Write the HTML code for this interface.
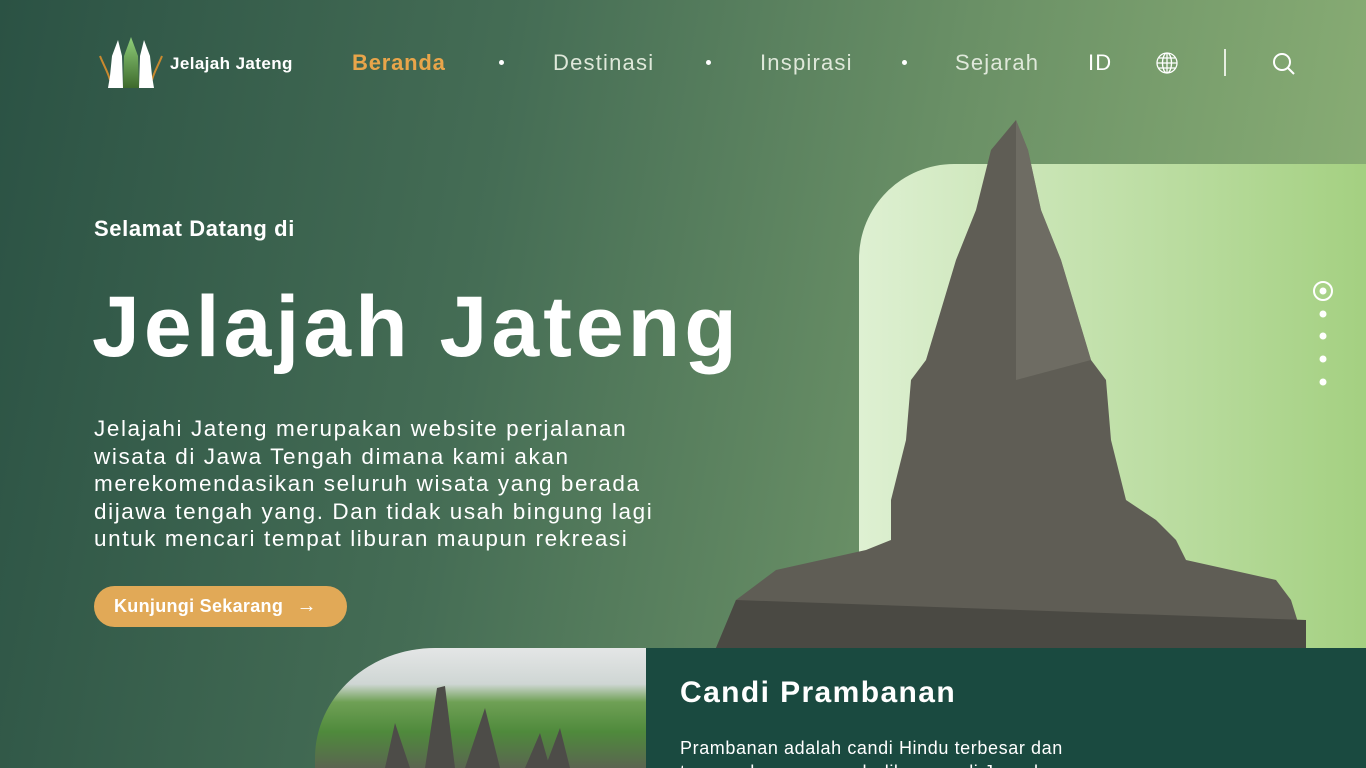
<!DOCTYPE html>
<html style="width:1366px;height:768px;overflow:hidden"><head><meta charset="utf-8"><style>
*{margin:0;padding:0;box-sizing:border-box}
body{width:1366px;height:768px;overflow:hidden;position:relative;font-family:"Liberation Sans",sans-serif;
background:linear-gradient(100deg,#2b5244 0%,#456d55 35%,#6a9066 65%,#8fb377 100%);}
.nav{position:absolute;top:50px;font-size:22px;color:#dfe8da;letter-spacing:1.2px}
.dot{position:absolute;top:60px;width:5px;height:5px;border-radius:50%;background:#fff}
</style></head><body>
<svg style="position:absolute;left:98px;top:36px" width="66" height="54" viewBox="0 0 66 54">
<path d="M2 20 C6 30 10 36 12 44" stroke="#c9892f" stroke-width="2" fill="none"/>
<path d="M64 20 C60 30 56 36 54 44" stroke="#c9892f" stroke-width="2" fill="none"/>
<defs><linearGradient id="g" x1="0" y1="0" x2="0" y2="1"><stop offset="0" stop-color="#8fcf7a"/><stop offset="1" stop-color="#3e6a2c"/></linearGradient></defs>
<path d="M33 1 L40 20 L41 52 L25 52 L26 20Z" fill="url(#g)"/>
<path d="M20 4 L24 20 L25 52 L10 52 L12 40 L14 20Z" fill="#fff"/>
<path d="M46 4 L42 20 L41 52 L56 52 L54 40 L52 20Z" fill="#fff"/>
</svg>
<div style="position:absolute;left:170px;top:54px;color:#fff;font-weight:bold;font-size:17px;letter-spacing:.4px">Jelajah Jateng</div>
<div class="nav" style="left:352px;color:#e9a54a;font-weight:bold;letter-spacing:.8px">Beranda</div>
<div class="dot" style="left:499px"></div>
<div class="nav" style="left:553px">Destinasi</div>
<div class="dot" style="left:706px"></div>
<div class="nav" style="left:760px">Inspirasi</div>
<div class="dot" style="left:902px"></div>
<div class="nav" style="left:955px">Sejarah</div>
<div class="nav" style="left:1088px;color:#fff">ID</div>
<svg style="position:absolute;left:1156px;top:52px" width="22" height="22" viewBox="0 0 22 22" fill="none" stroke="#fff" stroke-width="1.3"><circle cx="11" cy="11" r="10"/><ellipse cx="11" cy="11" rx="4.5" ry="10"/><path d="M1 11H21M3 6H19M3 16H19M11 1V21"/></svg>
<div style="position:absolute;left:1224px;top:49px;width:1.5px;height:27px;background:#e6eee0"></div>
<svg style="position:absolute;left:1272px;top:52px" width="24" height="24" viewBox="0 0 24 24" fill="none" stroke="#fff" stroke-width="2"><circle cx="10" cy="10" r="8"/><path d="M16 16L22 22"/></svg>

<div style="position:absolute;left:94px;top:216px;color:#fff;font-weight:bold;font-size:22px;letter-spacing:.6px">Selamat Datang di</div>
<div style="position:absolute;left:92px;top:278px;color:#fff;font-weight:bold;font-size:86px;letter-spacing:4px;white-space:nowrap">Jelajah Jateng</div>
<div style="position:absolute;left:94px;top:415px;color:#fff;font-size:22.5px;line-height:27.5px;letter-spacing:1.6px;white-space:nowrap">Jelajahi Jateng merupakan website perjalanan<br>wisata di Jawa Tengah dimana kami akan<br>merekomendasikan seluruh wisata yang berada<br>dijawa tengah yang. Dan tidak usah bingung lagi<br>untuk mencari tempat liburan maupun rekreasi</div>
<div style="position:absolute;left:94px;top:586px;width:253px;height:41px;border-radius:21px;background:#e1a957;color:#fff;font-weight:bold;font-size:18px;line-height:41px;padding-left:20px;letter-spacing:.3px">Kunjungi Sekarang <span style="margin-left:8px;font-size:20px">→</span></div>

<div style="position:absolute;left:859px;top:164px;width:507px;height:484px;border-top-left-radius:95px;background:linear-gradient(90deg,#def0d2,#a4d081)"></div>
<svg style="position:absolute;left:716px;top:120px" width="600" height="530" viewBox="0 0 600 530">
<path d="M300 0 L312 30 L325 90 L345 140 L360 190 L375 240 L390 260 L395 320 L410 380 L440 400 L460 420 L470 440 L560 460 L575 480 L590 528 L0 528 L20 480 L60 450 L150 430 L175 420 L175 380 L190 320 L195 260 L210 240 L225 190 L240 140 L260 90 L275 30 Z" fill="#5f5d55"/>
<path d="M300 0 L312 30 L325 90 L345 140 L360 190 L375 240 L300 260 Z" fill="#78766c" opacity=".6"/>
<path d="M20 480 L590 500 L590 528 L0 528Z" fill="#4a4943"/>
</svg>
<svg style="position:absolute;left:1310px;top:278px" width="26" height="112">
<circle cx="13" cy="13" r="9" fill="none" stroke="#fff" stroke-width="2"/><circle cx="13" cy="13" r="3.5" fill="#fff"/>
<circle cx="13" cy="36" r="3.5" fill="#fff"/><circle cx="13" cy="58" r="3.5" fill="#fff"/><circle cx="13" cy="81" r="3.5" fill="#fff"/><circle cx="13" cy="104" r="3.5" fill="#fff"/>
</svg>
<div style="position:absolute;left:315px;top:648px;width:331px;height:120px;border-top-left-radius:120px 110px;overflow:hidden;background:linear-gradient(180deg,#e4e6e6 0%,#cfd6d4 30%,#6fa055 45%,#4f8a3c 70%,#5a6550 100%)">
<svg width="331" height="120" style="position:absolute;left:0;top:0"><path d="M110 120 L122 40 L130 38 L140 120Z M150 120 L170 60 L185 120Z M70 120 L80 75 L95 120Z M210 120 L225 85 L235 120Z M230 120 L245 80 L255 120Z" fill="#4d4c48"/></svg></div>
<div style="position:absolute;left:646px;top:648px;width:720px;height:120px;background:#1a4a40;overflow:hidden">
<div style="position:absolute;left:34px;top:28px;color:#fff;font-weight:bold;font-size:30px;letter-spacing:1.4px">Candi Prambanan</div>
<div style="position:absolute;left:34px;top:88px;color:#fff;font-size:18px;line-height:24px;letter-spacing:.6px;white-space:nowrap">Prambanan adalah candi Hindu terbesar dan<br>termegah yang pernah dibangun di Jawa kuno</div>
</div>
</body></html>
